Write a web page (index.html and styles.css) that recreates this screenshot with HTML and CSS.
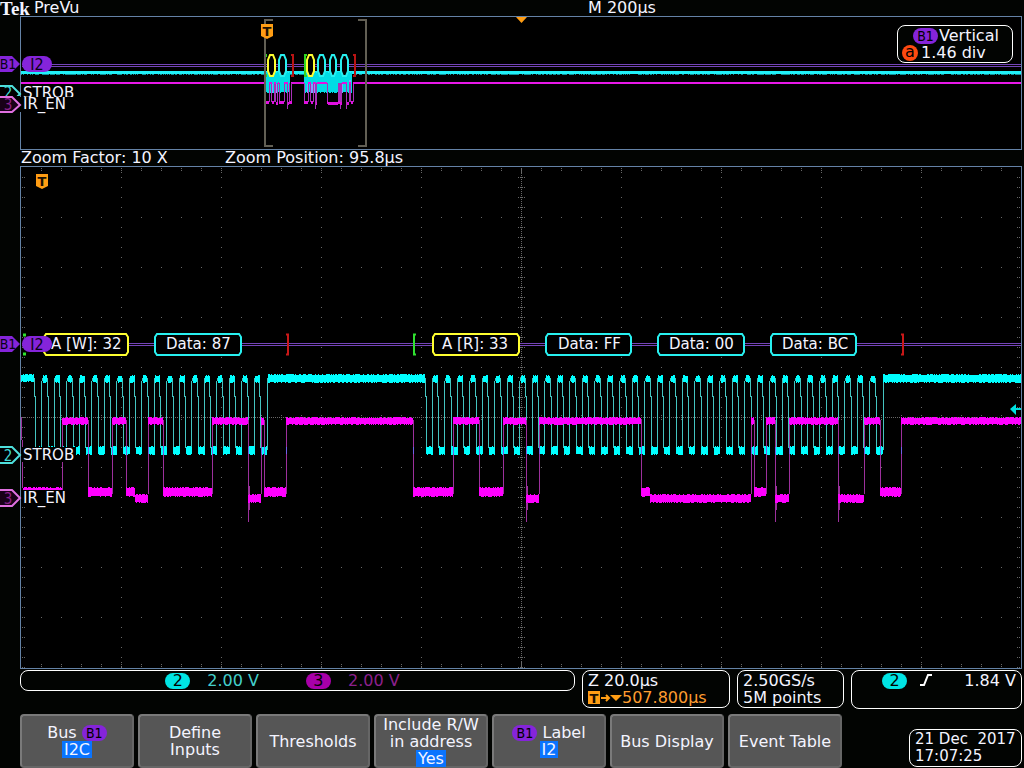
FILE: index.html
```
<!DOCTYPE html>
<html lang="en">
<head>
    <meta charset="UTF-8">
    <meta name="viewport" content="width=device-width, initial-scale=1.0">
    <title>Tek PreVu</title>
    <link rel="stylesheet" href="styles.css">
</head>
<body>
    <header class="topbar">
        <div class="brand"><span class="logo">Tek</span> <span>PreVu</span></div>
        <div>M 200µs</div>
    </header>

    <section class="overview">
        <svg class="scope" viewBox="0 16 1024 134" role="img" aria-label="Full acquisition">
            <rect class="frame" x="20.5" y="16.5" width="1001" height="133"/>
            <path class="bus-line" d="M22 64.5H1021M22 66.5H1021"/>
            <g id="overviewWaves" class="crisp"></g>
            <g id="overviewFrames"></g>
            <path class="zoom-bracket" d="M273 20H265V146H273M358 20H366V146H358"/>
            <path class="trigger-fill" d="M516 17H527L521.5 23Z"/>
            <path class="trigger-fill" d="M261 24H273V36L267 39L261 36Z"/>
            <text class="t-mark" x="267" y="36">T</text>
            <path class="b1-fill" d="M0 56H12L20 64L12 72H0Z"/>
            <text class="tag" x="8" y="69">B1</text>
            <rect class="b1-fill" x="22" y="56" width="30" height="16" rx="8"/>
            <text class="tag i2" x="37" y="70">I2</text>
            <path class="marker ch2" d="M0 86H12L20 94L12 102H0"/>
            <text class="tag ch2-text" x="8" y="98">2</text>
            <text class="label" x="23" y="98">STROB</text>
            <path class="label-back" d="M0 96H20V97H76V111H22V112H0Z"/>
            <path class="marker ch3" d="M0 97H12L20 105L12 112H0"/>
            <text class="tag ch3-text" x="8" y="110">3</text>
            <text class="label" x="23" y="109">IR_EN</text>
        </svg>
        <div class="readout vertical">
            <div class="vertical-title"><span class="pill b1">B1</span>Vertical</div>
            <div><span class="knob">a</span>1.46 div</div>
        </div>
    </section>

    <div class="zoombar">
        <div>Zoom Factor: 10 X</div>
        <div>Zoom Position: 95.8µs</div>
    </div>

    <svg class="scope" viewBox="0 166 1024 504" role="img" aria-label="Zoomed waveforms with I2C decode">
        <rect class="frame" x="20.5" y="166.5" width="1001" height="502"/>
        <g id="grid" class="grid crisp"></g>
        <path class="bus-line" d="M22 343.5H1021M22 345.5H1021"/>
        <g id="waves" class="crisp"></g>
        <g id="frames"></g>
        <g class="label">
            <text x="51" y="349">A [W]: 32</text>
            <text x="166" y="349">Data: 87</text>
            <text x="442" y="349">A [R]: 33</text>
            <text x="558" y="349">Data: FF</text>
            <text x="669" y="349">Data: 00</text>
            <text x="782" y="349">Data: BC</text>
        </g>
        <path class="trigger-fill" d="M36 174H48V186L42 189L36 186Z"/>
        <text class="t-mark" x="42" y="186">T</text>
        <path class="b1-fill" d="M0 336H12L20 344L12 352H0Z"/>
        <text class="tag" x="8" y="349">B1</text>
        <rect class="b1-fill" x="22" y="336" width="30" height="16" rx="8"/>
        <text class="tag i2" x="37" y="350">I2</text>
        <rect class="label-back" x="22" y="447" width="54" height="15"/>
        <path class="marker ch2" d="M0 447H12L20 455L12 463H0"/>
        <text class="tag ch2-text" x="8" y="461">2</text>
        <text class="label" x="23" y="460">STROB</text>
        <rect class="label-back" x="22" y="490" width="50" height="15"/>
        <path class="marker ch3" d="M0 490H12L20 498L12 506H0"/>
        <text class="tag ch3-text" x="8" y="504">3</text>
        <text class="label" x="23" y="503">IR_EN</text>
        <path class="level-arrow" d="M1010 409L1016 404V408H1021V410H1016V415Z"/>
    </svg>

    <section class="status">
        <div class="readout channels">
            <div class="channel"><span class="pill c2">2</span><span class="ch2-value">2.00 V</span></div>
            <div class="channel"><span class="pill c3">3</span><span class="ch3-value">2.00 V</span></div>
        </div>
        <div class="readout">
            <div>Z 20.0µs</div>
            <div class="delay">
                <svg width="34" height="14" viewBox="0 0 34 14" aria-hidden="true">
                    <rect width="12" height="13" fill="#ff9d14"/>
                    <text class="t-mark" x="6" y="12">T</text>
                    <path d="M13 7H21M18 4L21 7L18 10" fill="none" stroke="#ff9d14" stroke-width="2"/>
                    <path d="M22 4H34L28 10Z" fill="#ff9d14"/>
                </svg>507.800µs
            </div>
        </div>
        <div class="readout">
            <div>2.50GS/s</div>
            <div>5M points</div>
        </div>
        <div class="readout trigger">
            <span class="pill c2">2</span>
            <svg width="14" height="14" viewBox="0 0 14 14" aria-label="Rising edge">
                <path d="M0 13H4L8 3H12" fill="none" stroke="#fff" stroke-width="2"/>
            </svg>
            <span class="level">1.84 V</span>
        </div>
    </section>

    <footer class="bottom">
        <nav class="menu">
            <button type="button"><span>Bus <span class="pill b1">B1</span></span><span class="value">I2C</span></button>
            <button type="button"><span>Define</span><span>Inputs</span></button>
            <button type="button">Thresholds</button>
            <button type="button"><span>Include R/W</span><span>in address</span><span class="value">Yes</span></button>
            <button type="button"><span><span class="pill b1">B1</span> Label</span><span class="value">I2</span></button>
            <button type="button">Bus Display</button>
            <button type="button">Event Table</button>
        </nav>
        <div class="readout clock">
            <div>21 Dec&nbsp; 2017</div>
            <div>17:07:25</div>
        </div>
    </footer>
    <script src="scope.js"></script>
</body>
</html>
```
FILE: styles.css
```
* { padding: 0; margin: 0; box-sizing: border-box; }
body {
    font-family: "DejaVu Sans", sans-serif;
    font-size: 16px;
    line-height: 17px;
    background-color: #020402;
    color: #f4f4ff;
}
.topbar {
    display: grid;
    grid-template-columns: 588fr 436fr;
    height: 16px;
    line-height: 16px;
    white-space: nowrap;
}
.brand { display: flex; gap: 4px; }
.logo {
    font-family: "Liberation Serif", serif;
    font-size: 19px;
    line-height: 18px;
    font-weight: bold;
}
.overview { position: relative; }
.scope { display: block; width: 100%; height: auto; }
.crisp { shape-rendering: crispEdges; }
.zoombar {
    display: grid;
    grid-template-columns: 204fr 799fr;
    padding-left: 21px;
    height: 16px;
    line-height: 16px;
    white-space: nowrap;
}

/* scope drawing */
.frame { fill: #000; stroke: #6482a6; }
.grid { stroke: #686868; fill: none; }
.bus-line { stroke: #7444b8; fill: none; shape-rendering: crispEdges; }
.zoom-bracket { stroke: #625f54; stroke-width: 2; fill: none; }
.trigger-fill { fill: #ff9d14; }
.b1-fill { fill: #8524da; }
.label-back { fill: #000; }
.level-arrow { fill: #00e0e0; }
.label { font-size: 15px; fill: #f4f4ff; }
.tag {
    font-family: "DejaVu Sans Condensed", "DejaVu Sans", sans-serif;
    font-size: 14px;
    text-anchor: middle;
    fill: #0a0214;
}
.i2 { font-size: 16px; }
.t-mark { font-size: 13px; font-weight: bold; text-anchor: middle; fill: #1c1000; }
.marker { fill: #000; stroke-width: 2; }
.marker.ch2 { stroke: #4ee0dc; }
.marker.ch3 { stroke: #e070e0; fill: #180018; }
.ch2-text { fill: #40d8d4; font-size: 15px; }
.ch3-text { fill: #8c208c; font-size: 15px; }

/* readouts */
.readout {
    border: 1px solid #fff;
    border-radius: 8px;
    padding: 1px 5px;
    white-space: nowrap;
}
.pill {
    display: inline-block;
    width: 25px;
    height: 16px;
    line-height: 16px;
    border-radius: 8px;
    text-align: center;
    color: #000;
}
.pill.b1 {
    background-color: #8524da;
    font-family: "DejaVu Sans Condensed", "DejaVu Sans", sans-serif;
    font-size: 14px;
}
.pill.c2 { background-color: #00e4e4; }
.pill.c3 { background-color: #a800a8; }
.vertical {
    position: absolute;
    top: 9px;
    right: 11px;
    width: 116px;
    height: 38px;
    background-color: #020402;
}
.vertical div { display: flex; align-items: center; gap: 3px; }
.vertical .vertical-title { padding-left: 10px; gap: 1px; }
.knob {
    width: 16px;
    height: 16px;
    line-height: 14px;
    margin-left: -1px;
    border-radius: 8px;
    background-color: #ff4a10;
    color: #000;
    text-align: center;
}
.status {
    display: grid;
    grid-template-columns: 555fr 148fr 107fr 171fr;
    gap: 7px;
    padding: 0 2px 0 20px;
    height: 39px;
}
.status .readout { min-width: 0; height: 38px; padding: 1px 5px; }
.status .channels { display: flex; height: 21px; padding-left: 26%; gap: 47px; }
.channel { display: flex; gap: 17px; }
.pill.c2, .pill.c3 { margin-top: 1px; }
.ch2-value { color: #44d0cc; }
.ch3-value { color: #8c208c; }
.delay { display: flex; align-items: center; color: #ff9d30; }
.status .trigger { display: flex; gap: 13px; height: 39px; padding-left: 30px; }
.level { margin-left: auto; }

/* bottom menu */
.bottom { display: flex; margin-top: 5px; padding: 0 2px 0 20px; height: 54px; }
.menu { display: flex; gap: 4px; flex: 0 1 822px; }
.menu button {
    flex: 1;
    display: flex;
    flex-direction: column;
    align-items: center;
    justify-content: center;
    border: 2px solid #7a7a7a;
    border-right-color: #666;
    border-bottom-color: #666;
    border-radius: 4px;
    background-color: #565656;
    color: #f4f4ff;
    font: inherit;
    white-space: nowrap;
    cursor: pointer;
}
.value { padding: 0 2px; background-color: #0a74ff; }
.clock { margin: 15px 0 0 auto; width: 113px; height: 38px; font-size: 15px; }
```
FILE: scope.js
```
const CYAN = '#00ffff';
const CYAN_EDGE = '#44c4c0';
const MAGENTA = '#ff00ff';
const MAGENTA_EDGE = '#9c309c';

// [start x, level] of the IR_EN line: h = high, l = low, d = driven low by the slave
const data = [
    [23, 'l'], [62, 'h'], [88, 'l'], [112, 'h'], [126, 'l'], [135, 'd'], [148, 'h'],
    [163, 'l'], [212, 'h'], [248, 'd'], [261, 'h'], [264, 'l'], [286, 'h'], [413, 'l'],
    [453, 'h'], [479, 'l'], [503, 'h'], [526, 'd'], [539, 'h'], [641, 'l'], [650, 'd'],
    [751, 'h'], [754, 'l'], [766, 'h'], [775, 'd'], [789, 'h'], [838, 'd'], [864, 'h'],
    [880, 'l'], [901, 'h'], [1021, 'h']
];
const levels = { h: [418, 424], l: [488, 496], d: [495, 502] };
const packets = [
    [43, 129, '#ffff30'], [154, 242, '#28f0f0'], [432, 520, '#ffff30'],
    [545, 632, '#28f0f0'], [657, 745, '#28f0f0'], [770, 857, '#28f0f0']
];

let seed = 7;
function rnd() {
    seed = (seed * 16807) % 2147483647;
    return seed / 2147483647;
}

function path(id, d, stroke, width) {
    const p = document.createElementNS('http://www.w3.org/2000/svg', 'path');
    p.setAttribute('d', d);
    p.setAttribute('fill', 'none');
    p.setAttribute('stroke', stroke);
    p.setAttribute('stroke-width', width || 1);
    document.getElementById(id).appendChild(p);
    return p;
}

// noisy horizontal trace
function band(x0, x1, y0, y1) {
    let d = '';
    for (let x = Math.round(x0); x < x1; x++) {
        d += `M${x + 0.5} ${y0 - Math.floor(rnd() * 2)}V${y1 + Math.floor(rnd() * 2)}`;
    }
    return d;
}

function drawGrid() {
    let d = '';
    for (let x = 41; x < 1021; x += 20) {
        d += `M${x} 168.5h1M${x} 170.5h1M${x} 664.5h1M${x} 666.5h1M${x} 415.5h1M${x} 419.5h1`;
        for (let y = 217; y < 660; y += 50) d += `M${x} ${y}.5h1`;
    }
    for (let y = 177; y < 668; y += 10) {
        d += `M22 ${y}.5h1M24 ${y}.5h1M1017 ${y}.5h1M1019 ${y}.5h1M518 ${y}.5h1M520 ${y}.5h3M524 ${y}.5h1`;
        for (let x = 121; x < 1021; x += 100) d += `M${x} ${y}.5h1`;
    }
    for (let x = 121; x < 1021; x += 100) d += `M${x} 172.5h1M${x} 662.5h1`;
    for (let y = 169; y < 668; y += 2) d += `M521 ${y}.5h1`;
    for (let x = 23; x < 1021; x += 2) d += `M${x} 417.5h1`;
    path('grid', d, '#686868');
}

function drawClock() {
    let solid = band(21, 34, 375, 381) + band(268, 425, 375, 382) + band(883, 1021, 375, 382);
    let edges = '';
    function burst(first, count, start, end) {
        let left = start;
        for (let i = 0; i < count; i++) {
            const c = first + i * 12.5;
            edges += `M${left} 378V396H${left + 1}V448M${c - 3} 448V384L${c - 2} 378`;
            solid += band(left + 1, c - 2.5, 447, 454) + band(c - 2, c + 2.5, 376, 382);
            left = c + 2.5;
        }
        edges += `M${left} 378V396H${left + 1}V448M${end} 450V378`;
        solid += band(left + 1, end, 447, 454);
    }
    burst(44.5, 18, 34, 267);
    burst(435, 36, 425, 883);
    path('waves', edges, CYAN_EDGE);
    path('waves', solid, CYAN);
}

function drawData() {
    let solid = '', edges = 'M21.5 417V440M22.5 440V488', cross = '';
    for (let i = 0; i < data.length - 1; i++) {
        const [x, lv] = data[i];
        const [y0, y1] = levels[lv];
        solid += band(x, data[i + 1][0], y0, y1);
        if (i && (lv === 'h' || data[i - 1][1] === 'h')) {
            edges += `M${x + 0.5} 420V494`;
            cross += `M${x + 0.5} 447V454`;
        }
        // undershoot when the slave pulls down straight from high
        if (lv === 'd' && data[i - 1][1] === 'h') edges += `M${x + 0.5} 483V522M${x + 1.5} 486V510`;
    }
    path('waves', edges, MAGENTA_EDGE);
    path('waves', cross, '#7060e8');
    path('waves', solid, MAGENTA);
}

function drawPackets() {
    for (const [a, b, color] of packets) {
        path('frames', `M${a + 3} 334H${b - 3}L${b - 1} 337V352L${b - 3} 355H${a + 3}L${a + 1} 352V337Z`, color, 2)
            .setAttribute('fill', '#000');
    }
    path('frames', 'M23 335h3M23 354h3', '#30e030', 3);
    path('frames', 'M416 334.5H414V354.5H416', '#30e030', 2);
    path('frames', 'M286 334.5H288V354.5H286M901 334.5H903V354.5H901', '#c81818', 2);
}

function drawOverview() {
    const at = x => 265 + (x - 21) / 10;
    path('overviewWaves', 'M21 72.5H1021', '#20f0f8', 3);
    let fuzz = '';
    for (let x = 21; x < 1021; x++) if (rnd() < 0.6) fuzz += `M${x} 74.5h1`;
    path('overviewWaves', fuzz, '#109098');
    path('overviewWaves', 'M21 83H265M291 83H304M353 83H1021', '#e818e8', 2);
    // one clock cycle is about a pixel wide here, so the bursts fill up
    path('overviewWaves', band(266, 290, 73, 92) + band(304, 352, 73, 92), '#00dce4');
    path('overviewWaves', 'M271.5 84V93M276.5 84V93M307.5 84V93M311.5 84V93M314.5 84V93M341.5 84V93M349.5 80V93', '#80a0ff', 2);
    let low = '', high = '', edges = '';
    for (let i = 0; i < data.length - 1; i++) {
        const [x, lv] = data[i];
        const end = at(data[i + 1][0]);
        if (lv === 'h') high += `M${at(x)} 83H${end}`;
        else low += `M${at(x)} ${lv === 'd' ? 103 : 102}H${end}`;
        if (lv === 'h' || (i && data[i - 1][1] === 'h')) edges += `M${at(x)} 83V102`;
        if (lv === 'd' && data[i - 1][1] === 'h') edges += `M${at(x)} 102V109`;
    }
    path('overviewWaves', edges, '#a830b8');
    path('overviewWaves', high, '#e010e0', 2);
    path('overviewWaves', low, '#e010e0', 3);
    for (const [a, b, color] of packets) {
        const l = Math.round(at(a)) + 1, r = Math.round(at(b)) - 1;
        path('overviewFrames', `M${l + 2} 55H${r - 2}L${r} 60V71L${r - 2} 76H${l + 2}L${l} 71V60Z`, color, 2)
            .setAttribute('fill', '#000');
    }
    path('overviewFrames', 'M266 54V57M266 74V77M307 55H305V76H307', '#30d820', 2);
    path('overviewFrames', 'M291 55H293V76H291M353 55H355V76H353', '#b81414', 2);
}

drawGrid();
drawClock();
drawData();
drawPackets();
drawOverview();
```
